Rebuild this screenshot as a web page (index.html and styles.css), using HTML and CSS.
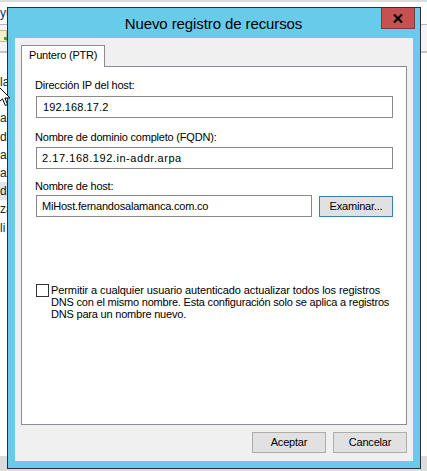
FILE: index.html
```html
<!DOCTYPE html>
<html lang="es">
<head>
<meta charset="utf-8">
<title>Nuevo registro de recursos</title>
<link rel="stylesheet" href="styles.css">
</head>
<body>
<div class="desktop">
  <div class="app-behind">
    <div class="app-topline"></div>
    <div class="app-menubar"><span class="menu-item">yu</span></div>
    <div class="app-toolbar"><span class="tb-icon"><span class="tb-dot"></span></span></div>
    <ul class="app-list">
      <li>la</li>
      <li></li>
      <li>a</li>
      <li>d</li>
      <li>a</li>
      <li>a</li>
      <li class="sel">d</li>
      <li>za</li>
      <li>li</li>
    </ul>
    <div class="app-spacer"></div>
    <div class="app-status"></div>
  </div>

  <div class="window">
    <div class="titlebar"><span class="title">Nuevo registro de recursos</span></div>
    <div class="close-btn">
      <svg width="10" height="9" viewBox="0 0 10 9"><path d="M1 0.5 L9 8.5 M9 0.5 L1 8.5" stroke="#000" stroke-width="2.2" fill="none"/></svg>
    </div>
    <div class="client">
      <div class="tabs"><div class="tab">Puntero (PTR)</div></div>
      <div class="panel">
        <div class="field-label l1">Dirección IP del host:</div>
        <div class="textbox tb1">192.168.17.2</div>
        <div class="field-label l2">Nombre de dominio completo (FQDN):</div>
        <div class="textbox tb2">2.17.168.192.in-addr.arpa</div>
        <div class="field-label l3">Nombre de host:</div>
        <div class="host-row">
          <div class="textbox tb3">MiHost.fernandosalamanca.com.co</div>
          <div class="btn btn-focus">Examinar...</div>
        </div>
        <div class="check-row">
          <span class="checkbox"></span>
          <span class="check-text"><span class="line1">Permitir a cualquier usuario autenticado actualizar todos los registros</span><br>DNS con el mismo nombre. Esta configuración solo se aplica a registros<br>DNS para un nombre nuevo.</span>
        </div>
      </div>
      <div class="footer">
        <div class="btn">Aceptar</div>
        <div class="btn">Cancelar</div>
      </div>
    </div>
  </div>

  <svg class="cursor" width="13" height="21" viewBox="0 0 13 21"><path d="M0.5 0.5 L0.5 16.5 L4.5 12.8 L7.3 19.5 L9.6 18.5 L6.9 12 L12 12 Z" fill="#fff" stroke="#000" stroke-width="1"/></svg>
</div>
</body>
</html>
```

FILE: styles.css
```css
* { box-sizing: border-box; }
html, body { margin: 0; padding: 0; }
body {
  width: 427px;
  height: 471px;
  overflow: hidden;
  background: #fff;
  font-family: "Liberation Sans", Arial, sans-serif;
}
.desktop {
  position: relative;
  width: 427px;
  height: 471px;
  overflow: hidden;
  background: #fff;
}

/* window behind the dialog */
.app-behind {
  position: absolute;
  left: 0;
  top: 0;
  width: 427px;
  height: 471px;
  display: flex;
  flex-direction: column;
  background: #fff;
}
.app-topline { height: 2px; background: #dcdcdc; }
.app-menubar {
  height: 22px;
  font-size: 12px;
  line-height: 22px;
  color: #1c2a5e;
  white-space: nowrap;
}
.menu-item { margin-left: 0; }
.app-toolbar {
  height: 29px;
  background: #f4f4f4;
  border-top: 1px solid #b9b9b9;
  border-bottom: 2px solid #c4c4c4;
  padding-top: 5px;
}
.tb-icon {
  display: block;
  position: relative;
  width: 7px;
  height: 12px;
  background: #f6efc8;
  border: 1px solid #c8bd92;
  border-left: 0;
}
.tb-dot {
  display: block;
  position: absolute;
  right: -1px;
  bottom: 1px;
  width: 3px;
  height: 3px;
  background: #3fa63a;
}
.app-list {
  list-style: none;
  margin: 20px 0 0 0;
  padding: 0;
  width: 12px;
  font-size: 12px;
  color: #222;
}
.app-list li {
  height: 18.2px;
  line-height: 18px;
  white-space: nowrap;
}
.app-list li.sel { background: #e4e4e4; }
.app-spacer { flex: 1; }
.app-status { height: 15px; background: #dcdcdc; }

/* dialog window */
.window {
  position: absolute;
  left: 7px;
  top: 7px;
  width: 414px;
  height: 462px;
  border: 1px solid #2e2e2e;
  background: #68cbea;
  padding: 0 7px 7px;
  display: flex;
  flex-direction: column;
  z-index: 2;
}
.titlebar {
  height: 30px;
  display: flex;
  align-items: center;
  justify-content: center;
}
.title {
  font-size: 15px;
  color: #000;
  letter-spacing: -0.1px;
  margin-left: -1px;
}
.close-btn {
  position: absolute;
  top: 0;
  right: 5px;
  width: 34px;
  height: 21px;
  background: #c75050;
  border: 1px solid #7c3b3b;
  border-top: 0;
  display: flex;
  align-items: center;
  justify-content: center;
}
.client {
  flex: 1;
  background: #f0f0f0;
  padding: 7px 6px 0;
  display: flex;
  flex-direction: column;
  font-size: 11px;
  letter-spacing: -0.2px;
  color: #000;
}
.tabs { display: flex; }
.tab {
  position: relative;
  z-index: 1;
  width: 84px;
  height: 22px;
  margin-bottom: -1px;
  border: 1px solid #898c95;
  border-bottom: 0;
  background: #fff;
  padding-left: 7px;
  line-height: 19px;
  white-space: nowrap;
}
.panel {
  height: 359px;
  border: 1px solid #898c95;
  background: #fff;
  padding: 11px 13px 0;
}
.field-label {
  height: 14px;
  line-height: 14px;
  white-space: nowrap;
}
.l2 { margin-top: 12px; }
.l3 { margin-top: 10px; }
.textbox {
  height: 22px;
  border: 1px solid #8a8a8a;
  background: #fff;
  padding-left: 6px;
  line-height: 20px;
  white-space: nowrap;
  margin-left: 1px;
}
.tb1 { width: 357px; margin-top: 4px; letter-spacing: 0.1px; }
.tb2 { width: 357px; margin-top: 3px; padding-left: 5px; letter-spacing: 0.55px; }
.host-row {
  display: flex;
  gap: 7px;
  margin-top: 2px;
  margin-left: 1px;
}
.tb3 { width: 276px; margin-left: 0; padding-left: 5px; }
.btn {
  width: 74px;
  height: 21px;
  background: #e1e1e1;
  border: 1px solid #adadad;
  text-align: center;
  line-height: 19px;
  white-space: nowrap;
}
.btn-focus { border-color: #3c7fb1; margin-top: 1px; }
.check-row {
  display: flex;
  align-items: flex-start;
  gap: 2px;
  margin-top: 67px;
  margin-left: 1px;
}
.checkbox {
  flex: none;
  width: 13px;
  height: 13px;
  border: 1px solid #333;
  background: #fff;
}
.check-text {
  line-height: 12px;
  white-space: nowrap;
}
.line1 { letter-spacing: -0.1px; }
.footer {
  display: flex;
  justify-content: flex-end;
  gap: 7px;
  margin-top: 7px;
}

.cursor {
  position: absolute;
  left: -2px;
  top: 86px;
  z-index: 5;
}
```
